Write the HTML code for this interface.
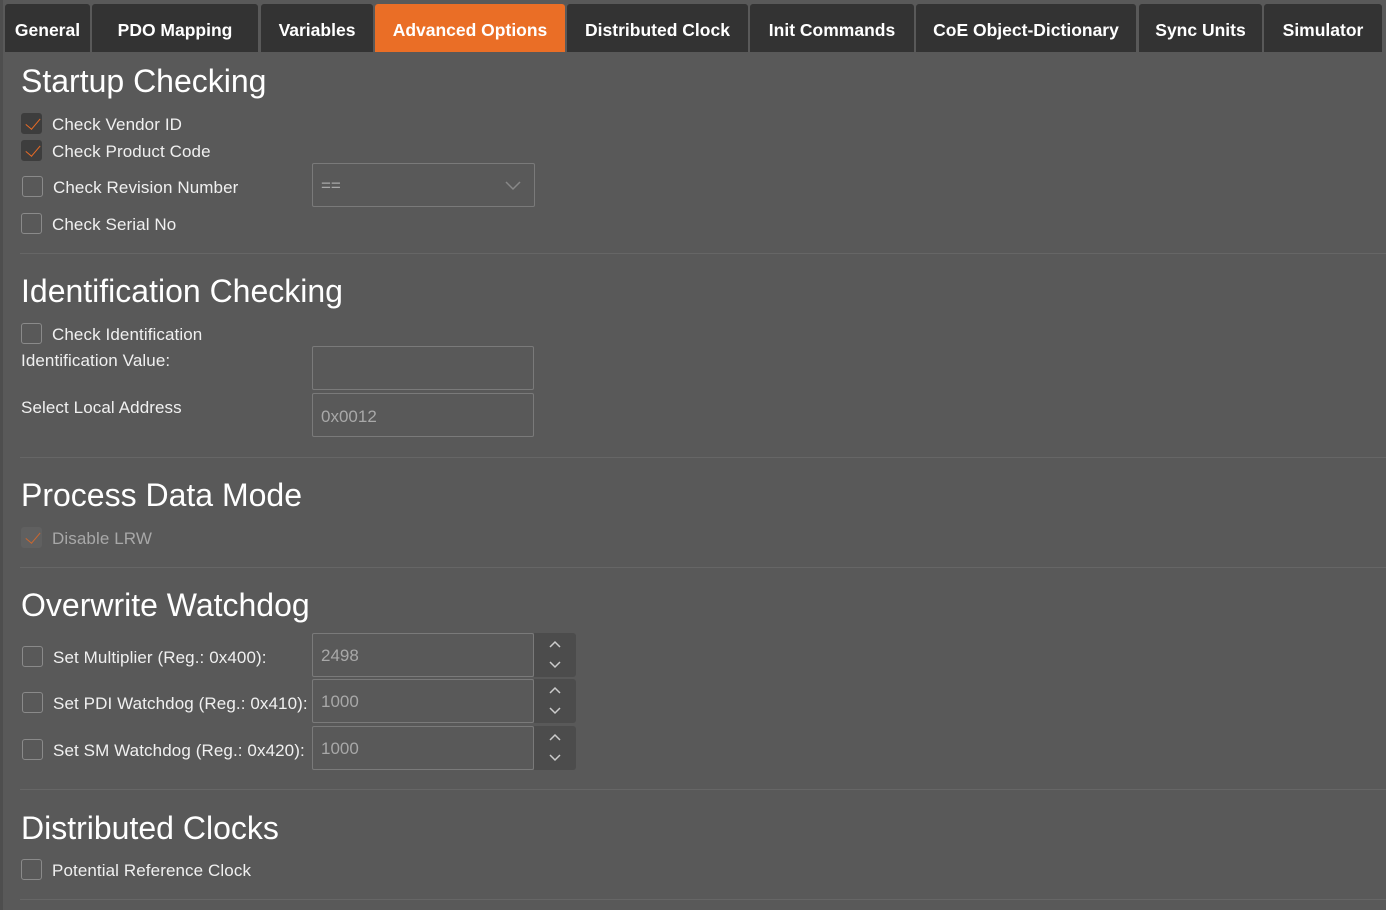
<!DOCTYPE html>
<html><head><meta charset="utf-8"><style>
*{box-sizing:border-box;margin:0;padding:0}
body{width:1386px;height:910px;background:#595959;font-family:"Liberation Sans",sans-serif;color:#f2f2f2;position:relative;overflow:hidden}
.lstrip{position:absolute;left:0;top:0;width:3px;height:910px;background:#4e4e4e}
.tab{position:absolute;top:4px;height:48px;background:#333;color:#fff;font-weight:bold;font-size:17.5px;line-height:52px;text-align:center;border-radius:3px 3px 0 0}
.tab.on{background:#ea6e26}
.h{position:absolute;left:21px;font-size:32px;color:#fff;white-space:nowrap}
.t{position:absolute;font-size:17px;white-space:nowrap;color:#f0f0f0;letter-spacing:0.1px}
.cb{position:absolute;width:21px;height:21px;border:1px solid #8a8a8a;border-radius:3px}
.cb.on{background:#3d3d3d;border-color:#3d3d3d}
.cb.on:after{content:"";position:absolute;left:7px;top:1px;width:7px;height:13px;border-right:1.6px solid #e96b25;border-bottom:1.6px solid #e96b25;transform:rotate(40deg)}
.box{position:absolute;border:1px solid #7a7a7a;border-radius:2px;font-size:17px;color:#a8a8a8;padding-left:8px}
.sep{position:absolute;left:20px;right:0;height:1px;background:#666}
.spin{position:absolute;left:534px;width:42px;height:44px;background:#4c4c4c;border-radius:0 3px 3px 0}
.spin svg{position:absolute;left:14px}
</style></head><body>
<div class="lstrip"></div>
<div class="tab" style="left:5px;width:85px">General</div>
<div class="tab" style="left:92px;width:166px">PDO Mapping</div>
<div class="tab" style="left:261px;width:112px">Variables</div>
<div class="tab on" style="left:375px;width:190px">Advanced Options</div>
<div class="tab" style="left:567px;width:181px">Distributed Clock</div>
<div class="tab" style="left:750px;width:164px">Init Commands</div>
<div class="tab" style="left:916px;width:220px">CoE Object-Dictionary</div>
<div class="tab" style="left:1139px;width:123px">Sync Units</div>
<div class="tab" style="left:1264px;width:118px">Simulator</div>

<div class="h" style="top:63px">Startup Checking</div>
<div class="cb on" style="left:21px;top:113px"></div><div class="t" style="left:52px;top:115px">Check Vendor ID</div>
<div class="cb on" style="left:21px;top:140px"></div><div class="t" style="left:52px;top:142px">Check Product Code</div>
<div class="cb" style="left:22px;top:176px"></div><div class="t" style="left:53px;top:178px">Check Revision Number</div>
<div class="box" style="left:312px;top:163px;width:223px;height:44px;line-height:44px">==
<svg style="position:absolute;right:12px;top:15px" width="18" height="12" viewBox="0 0 18 12"><path d="M2 3l7 7 7-7" stroke="#888" stroke-width="1.5" fill="none"/></svg></div>
<div class="cb" style="left:21px;top:213px"></div><div class="t" style="left:52px;top:215px">Check Serial No</div>
<div class="sep" style="top:253px"></div>

<div class="h" style="top:273px">Identification Checking</div>
<div class="cb" style="left:21px;top:323px"></div><div class="t" style="left:52px;top:325px">Check Identification</div>
<div class="t" style="left:21px;top:351px">Identification Value:</div>
<div class="box" style="left:312px;top:346px;width:222px;height:44px"></div>
<div class="t" style="left:21px;top:398px">Select Local Address</div>
<div class="box" style="left:312px;top:393px;width:222px;height:44px;line-height:46px">0x0012</div>
<div class="sep" style="top:457px"></div>

<div class="h" style="top:477px">Process Data Mode</div>
<div class="cb on" style="left:21px;top:527px;background:#626262;border-color:#626262;opacity:.8"></div><div class="t" style="left:52px;top:529px;color:#a8a8a8">Disable LRW</div>
<div class="sep" style="top:567px"></div>

<div class="h" style="top:587px">Overwrite Watchdog</div>
<div class="cb" style="left:22px;top:646px"></div><div class="t" style="left:53px;top:648px">Set Multiplier (Reg.: 0x400):</div>
<div class="box" style="left:312px;top:633px;width:222px;height:44px;line-height:44px">2498</div>
<div class="spin" style="top:633px"><svg style="top:5px" width="14" height="36" viewBox="0 0 14 36"><path d="M2 9l5-5 5 5M2 24l5 5 5-5" stroke="#ccc" stroke-width="1.5" fill="none"/></svg></div>
<div class="cb" style="left:22px;top:692px"></div><div class="t" style="left:53px;top:694px">Set PDI Watchdog (Reg.: 0x410):</div>
<div class="box" style="left:312px;top:679px;width:222px;height:44px;line-height:44px">1000</div>
<div class="spin" style="top:679px"><svg style="top:5px" width="14" height="36" viewBox="0 0 14 36"><path d="M2 9l5-5 5 5M2 24l5 5 5-5" stroke="#ccc" stroke-width="1.5" fill="none"/></svg></div>
<div class="cb" style="left:22px;top:739px"></div><div class="t" style="left:53px;top:741px">Set SM Watchdog (Reg.: 0x420):</div>
<div class="box" style="left:312px;top:726px;width:222px;height:44px;line-height:44px">1000</div>
<div class="spin" style="top:726px"><svg style="top:5px" width="14" height="36" viewBox="0 0 14 36"><path d="M2 9l5-5 5 5M2 24l5 5 5-5" stroke="#ccc" stroke-width="1.5" fill="none"/></svg></div>
<div class="sep" style="top:789px"></div>

<div class="h" style="top:810px">Distributed Clocks</div>
<div class="cb" style="left:21px;top:859px"></div><div class="t" style="left:52px;top:861px">Potential Reference Clock</div>
<div class="sep" style="top:899px"></div>
</body></html>
